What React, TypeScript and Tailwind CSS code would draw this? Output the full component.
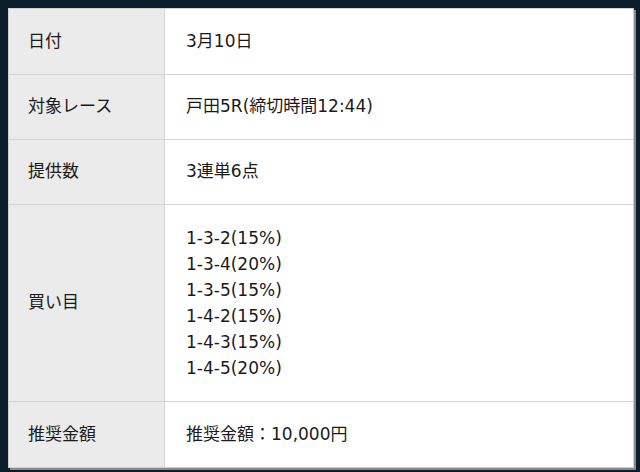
import React from "react";

const rows: { label: string; value: React.ReactNode; h: string }[] = [
  { label: "日付", value: "3月10日", h: "h-[65px]" },
  { label: "対象レース", value: "戸田5R(締切時間12:44)", h: "h-[65px]" },
  { label: "提供数", value: "3連単6点", h: "h-[65px]" },
  {
    label: "買い目",
    value: (
      <div className="leading-[26px]">
        <div>1-3-2(15%)</div>
        <div>1-3-4(20%)</div>
        <div>1-3-5(15%)</div>
        <div>1-4-2(15%)</div>
        <div>1-4-3(15%)</div>
        <div>1-4-5(20%)</div>
      </div>
    ),
    h: "h-[197px]",
  },
  { label: "推奨金額", value: "推奨金額：10,000円", h: "h-[66px]" },
];

export default function App() {
  return (
    <div
      className="w-[640px] h-[472px] bg-[#0a1f2b] pt-[8px] pl-[8px]"
      style={{ fontFamily: '"DejaVu Sans", "Noto Sans CJK JP", sans-serif' }}
    >
      <div className="w-[626px] border border-[#cfcfcf] bg-white shadow-[2px_2px_0_#8a8a8a] text-[17px] text-[#1a1a1a]">
        {rows.map((r, i) => (
          <div
            key={i}
            className={`flex ${r.h} ${i > 0 ? "border-t border-[#d4d4d4]" : ""}`}
          >
            <div className="w-[156px] shrink-0 bg-[#ebebeb] border-r border-[#d4d4d4] flex items-center pl-[19px]">
              {r.label}
            </div>
            <div className="flex-1 flex items-center pl-[21px]">{r.value}</div>
          </div>
        ))}
      </div>
    </div>
  );
}
